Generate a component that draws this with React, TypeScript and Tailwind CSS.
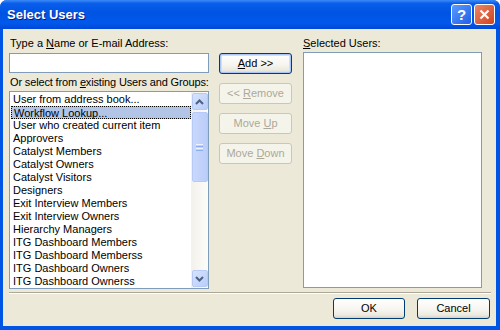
import React from "react";

// ── Select Users dialog, Windows XP (Luna) look ─────────────────────────────

const ITEMS = [
  "User from address book...",
  "Workflow Lookup...",
  "User who created current item",
  "Approvers",
  "Catalyst Members",
  "Catalyst Owners",
  "Catalyst Visitors",
  "Designers",
  "Exit Interview Members",
  "Exit Interview Owners",
  "Hierarchy Managers",
  "ITG Dashboard Members",
  "ITG Dashboard Memberss",
  "ITG Dashboard Owners",
  "ITG Dashboard Ownerss",
];

const FONT = "font-['Liberation_Sans',Arial,sans-serif]";

function Btn({
  children,
  disabled,
  isDefault,
  className = "",
}: {
  children: React.ReactNode;
  disabled?: boolean;
  isDefault?: boolean;
  className?: string;
}) {
  if (disabled) {
    return (
      <div
        className={`flex h-[21px] items-center justify-center rounded-[3px] border border-[#C9C7BA] bg-[#F5F4EA] text-[11px] leading-none text-[#ACA899] ${className}`}
      >
        <span className="whitespace-pre">{children}</span>
      </div>
    );
  }
  return (
    <div
      className={`flex h-[21px] items-center justify-center rounded-[3px] border border-[#003C74] bg-[linear-gradient(to_bottom,#FFFFFF_0%,#F6F5F0_55%,#ECEAE0_85%,#D6D0C5_100%)] text-[11px] leading-none text-black ${
        isDefault ? "shadow-[inset_0_0_0_1px_#A9C6F6,inset_0_0_0_2px_#CFE0FA]" : ""
      } ${className}`}
    >
      <span className="whitespace-pre">{children}</span>
    </div>
  );
}

function Chevron({ up }: { up?: boolean }) {
  return (
    <svg width="9" height="6" viewBox="0 0 9 6" aria-hidden="true">
      <polyline
        points={up ? "1,5 4.5,1.5 8,5" : "1,1 4.5,4.5 8,1"}
        fill="none"
        stroke="#4D6185"
        strokeWidth="2"
      />
    </svg>
  );
}

function ScrollBtn({ up }: { up?: boolean }) {
  return (
    <div className="flex h-[17px] w-[16px] items-center justify-center rounded-[2px] border border-[#B6CAF9] bg-[linear-gradient(to_bottom_right,#D7E3FD,#BACDF9)]">
      <Chevron up={up} />
    </div>
  );
}

function Scrollbar() {
  return (
    <div className="flex w-[17px] flex-col items-center bg-[linear-gradient(to_right,#F3F1EB,#FCFCFA)] pt-[1px]">
      <ScrollBtn up />
      <div className="mt-[2px] flex h-[70px] w-[16px] flex-col items-center justify-center gap-[1px] rounded-[2px] border border-[#B6CAF9] bg-[linear-gradient(to_right,#C9D8FC,#BACDF9)]">
        <div className="h-[1px] w-[7px] bg-[#EEF3FE]" />
        <div className="h-[1px] w-[7px] bg-[#8CACF0]" />
        <div className="h-[1px] w-[7px] bg-[#EEF3FE]" />
        <div className="h-[1px] w-[7px] bg-[#8CACF0]" />
      </div>
      <div className="flex-1" />
      <div className="mb-[1px]">
        <ScrollBtn />
      </div>
    </div>
  );
}

export default function App() {
  return (
    <div className={`${FONT} flex h-[330px] w-[500px] flex-col overflow-hidden rounded-t-[7px] bg-[#0055E5]`}>
      {/* Title bar */}
      <div className="flex h-[29px] items-center bg-[linear-gradient(to_bottom,#3D8BF7_0%,#0A5DEB_12%,#0054E3_45%,#0158EB_80%,#0047D7_100%)] pl-[7px] pr-[5px]">
        <span className="flex-1 pt-[1px] text-[13px] font-bold text-white [text-shadow:1px_1px_0_#0A1E7A]">
          Select Users
        </span>
        <div className="flex gap-[2px]">
          <div className="flex h-[21px] w-[21px] items-center justify-center rounded-[3px] border border-white bg-[linear-gradient(to_bottom_right,#5B9BFF,#1E5FE8)] text-[15px] font-bold leading-none text-white">
            ?
          </div>
          <div className="flex h-[21px] w-[21px] items-center justify-center rounded-[3px] border border-white bg-[linear-gradient(to_bottom_right,#E98768,#D0421E)]">
            <svg width="11" height="11" viewBox="0 0 11 11" aria-hidden="true">
              <path d="M1.5 1.5 L9.5 9.5 M9.5 1.5 L1.5 9.5" stroke="#fff" strokeWidth="2.2" />
            </svg>
          </div>
        </div>
      </div>

      {/* Body */}
      <div className="ml-[3px] mr-[4px] flex flex-1 flex-col bg-[#ECE9D8] px-[6px] pt-[8px] text-[11px] leading-[13px] text-black">
        <div className="flex">
          {/* Left column */}
          <div className="flex w-[200px] flex-col">
            <div className="h-[13px] whitespace-nowrap pl-[1px]">
              Type a <span className="underline">N</span>ame or E-mail Address:
            </div>
            <div className="mt-[3px] h-[20px] border border-[#7F9DB9] bg-white" />
            <div className="mt-[3px] h-[13px] whitespace-nowrap pl-[1px] tracking-[-0.15px]">
              Or select from <span className="underline">e</span>xisting Users and Groups:
            </div>
            <div className="mt-[2px] flex h-[198px] border border-[#7F9DB9] bg-white">
              <div className="flex flex-1 flex-col pl-[1px] pt-[1px]">
                {ITEMS.map((item, i) => (
                  <div
                    key={item}
                    className={`h-[13px] whitespace-nowrap pl-[2px] leading-[12px] ${
                      i === 1 ? "border border-dotted border-black bg-[#B2C5E7] pl-[1px]" : ""
                    }`}
                  >
                    {item}
                  </div>
                ))}
              </div>
              <Scrollbar />
            </div>
          </div>

          {/* Buttons column */}
          <div className="ml-[10px] flex w-[73px] flex-col gap-[9px] pt-[16px]">
            <Btn isDefault>
              <span className="underline">A</span>dd &gt;&gt;
            </Btn>
            <Btn disabled>
              &lt;&lt; <span className="underline">R</span>emove
            </Btn>
            <Btn disabled>
              Move <span className="underline">U</span>p
            </Btn>
            <Btn disabled>
              Move <span className="underline">D</span>own
            </Btn>
          </div>

          {/* Right column */}
          <div className="ml-[11px] flex w-[179px] flex-col">
            <div className="h-[13px]">
              <span className="underline">S</span>elected Users:
            </div>
            <div className="mt-[2px] h-[236px] border border-[#7F9DB9] bg-white" />
          </div>
        </div>

        {/* Separator */}
        <div className="mr-[-1px] mt-[3px] h-[2px] border-t border-[#ACA899] bg-white" />

        {/* Footer */}
        <div className="mt-[4px] flex justify-end gap-[12px]">
          <Btn className="w-[72px]">OK</Btn>
          <Btn className="w-[73px]">Cancel</Btn>
        </div>
      </div>
      <div className="h-[4px]" />
    </div>
  );
}
